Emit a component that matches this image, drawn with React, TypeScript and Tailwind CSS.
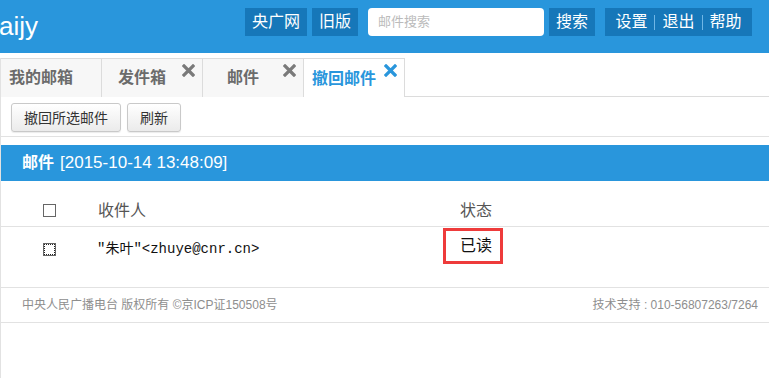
import React from "react";

// ===== FONTS =====
const SANS = "font-['Liberation_Sans','Noto_Sans_CJK_SC',sans-serif]";
const MONO = "font-['Liberation_Mono','Noto_Sans_CJK_SC',monospace]";

type Tab = {
  title: string;
  closable: boolean;
  active?: boolean;
};

const TABS: Tab[] = [
  { title: "我的邮箱", closable: false },
  { title: "发件箱", closable: true },
  { title: "邮件", closable: true },
  { title: "撤回邮件", closable: true, active: true },
];

// ===== COMPONENTS =====
function CloseIcon({ active }: { active?: boolean }) {
  return (
    <svg width="13" height="13" viewBox="0 0 13 13" className="absolute right-[7px] top-[5px]">
      <path
        d="M2 2 L11 11 M11 2 L2 11"
        stroke={active ? "#2996dc" : "#7a7a7a"}
        strokeWidth="3.2"
        strokeLinecap="square"
      />
    </svg>
  );
}

function TopButton({ label }: { label: string }) {
  return (
    <span className="h-7 px-[7px] flex items-center bg-[#1677b9] text-white text-base leading-none">
      {label}
    </span>
  );
}

function ToolButton({ label }: { label: string }) {
  return (
    <button className="h-[29px] px-3 border border-[#c9c9c9] rounded-[3px] bg-linear-to-b from-white to-[#ebebeb] text-sm text-[#333] shadow-[0_1px_1px_rgba(0,0,0,0.08)]">
      {label}
    </button>
  );
}

function Checkbox({ focused }: { focused?: boolean }) {
  return (
    <span className="w-[13px] h-[13px] border border-[#666] bg-white flex">
      {focused && <span className="flex-1 border border-dotted border-[#222]" />}
    </span>
  );
}

// ===== MAIN =====
export default function App() {
  return (
    <div className={`w-[769px] h-[378px] overflow-hidden bg-white ${SANS}`}>
      {/* HEADER */}
      <div className="h-[53px] bg-[#2996dc] flex items-start pt-2">
        <span className="text-white text-[26px] leading-none mt-[5px] -ml-[1px]">aijy</span>
        <div className="ml-auto flex items-center mr-[17px]">
          <div className="flex gap-[5px]">
            <TopButton label="央广网" />
            <TopButton label="旧版" />
          </div>
          <div className="ml-[10px] w-[176px] h-7 bg-white rounded-[4px] flex items-center px-[10px] text-[13px] text-[#bbb]">
            邮件搜索
          </div>
          <span className="ml-[5px]">
            <TopButton label="搜索" />
          </span>
          <div className="ml-[10px] h-7 w-[147px] bg-[#1677b9] flex items-center justify-center text-white text-base leading-none">
            <span>设置</span>
            <span className="w-px h-[15px] bg-[#6fb6e6] mx-[7px]" />
            <span>退出</span>
            <span className="w-px h-[15px] bg-[#6fb6e6] mx-[7px]" />
            <span>帮助</span>
          </div>
        </div>
      </div>

      {/* CONTENT */}
      <div className="border-l border-[#e2e2e2] mt-[5px]">
        {/* TABS */}
        <div className="flex h-[39px] border-b border-[#dcdcdc]">
          {TABS.map((tab) => (
            <div
              key={tab.title}
              className={`relative w-[101px] h-[39px] border-t border-r border-[#dcdcdc] flex items-center justify-center pr-[20px] text-base font-bold ${
                tab.active ? "bg-white text-[#2996dc] pt-[2px]" : "bg-[#f7f7f7] text-[#6b6b6b]"
              }`}
            >
              <span>{tab.title}</span>
              {tab.closable && <CloseIcon active={tab.active} />}
            </div>
          ))}
        </div>

        {/* TOOLBAR */}
        <div className="h-[40px] border-b border-[#e2e2e2] flex items-start pt-[6px] pl-[10px] gap-[6px]">
          <ToolButton label="撤回所选邮件" />
          <ToolButton label="刷新" />
        </div>

        {/* MAIL HEADER BAR */}
        <div className="mt-[8px] h-9 bg-[#2996dc] flex items-center pl-[21px] text-white">
          <span className="font-bold text-base">邮件</span>
          <span className="ml-[6px] text-[17px]">[2015-10-14 13:48:09]</span>
        </div>

        {/* TABLE */}
        <div className="h-[46px] border-b border-[#e2e2e2] flex items-center pt-[14px] text-base text-[#555]">
          <span className="w-[97px] pl-[42px] flex">
            <Checkbox />
          </span>
          <span className="w-[345px]">收件人</span>
          <span className="pl-[17px]">状态</span>
        </div>
        <div className="h-[61px] border-b border-[#e2e2e2]">
          <div className="h-[44px] flex items-center">
            <span className="w-[96px] pl-[42px] flex pt-[1px]">
              <Checkbox focused />
            </span>
            <span className={`w-[346px] text-sm text-[#111] ${MONO}`}>"朱叶"&lt;zhuye@cnr.cn&gt;</span>
            <span className="self-start mt-[1px] w-[60px] h-[36px] border-[3px] border-[#ee3b3b] flex items-center pl-[14px] text-base text-[#111]">
              已读
            </span>
          </div>
        </div>

        {/* FOOTER */}
        <div className="h-[35px] border-b border-[#e2e2e2] flex items-center justify-between pl-[21px] pr-[11px] text-xs text-[#8e8e8e]">
          <span>中央人民广播电台 版权所有 ©京ICP证150508号</span>
          <span>技术支持 : 010-56807263/7264</span>
        </div>
        <div className="h-[60px]" />
      </div>
    </div>
  );
}
